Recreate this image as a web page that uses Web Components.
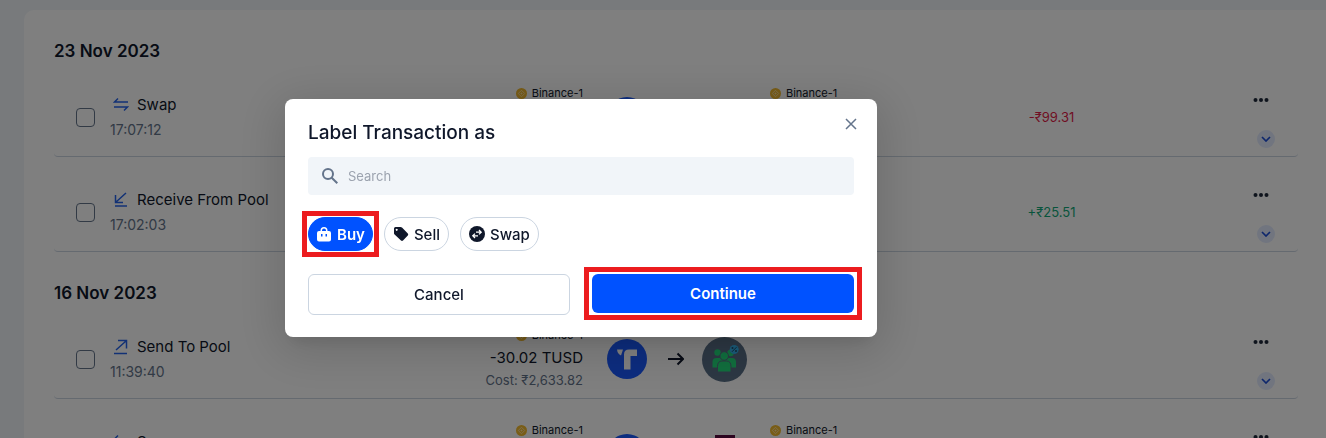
<!DOCTYPE html>
<html lang="en">
<head>
    <meta charset="UTF-8">
    <meta name="viewport" content="width=device-width, initial-scale=1.0">
    <title>Transactions</title>
    <style>
        body {
            margin: 0;
            height: 100vh;
            overflow: hidden;
            background: #f1f5f9;
            color: #0f172a;
            font-family: Inter, "Liberation Sans", sans-serif;
            font-size: 15px;
        }
    </style>
</head>
<body>
    <tx-list>
        <tx-group date="23 Nov 2023">
            <tx-row kind="swap" label="Swap" time="17:07:12" gain="-₹99.31" from="Binance-1" to="Binance-1">
                <token-icon slot="source" name="tusd"></token-icon>
            </tx-row>
            <tx-row kind="receive" label="Receive From Pool" time="17:02:03" gain="+₹25.51"></tx-row>
        </tx-group>
        <tx-group date="16 Nov 2023">
            <tx-row kind="send" label="Send To Pool" time="11:39:40" from="Binance-1" amount="-30.02 TUSD" cost="Cost: ₹2,633.82">
                <token-icon slot="source" name="tusd"></token-icon>
                <token-icon slot="target" name="pool"></token-icon>
            </tx-row>
            <tx-row kind="swap" label="Swap" time="" from="Binance-1" to="Binance-1">
                <token-icon slot="source" name="tusd"></token-icon>
                <token-icon slot="target" name="maroon"></token-icon>
            </tx-row>
        </tx-group>
    </tx-list>

    <modal-dialog heading="Label Transaction as">
        <search-box slot="search"></search-box>
        <focus-frame slot="chips"><label-chip icon="buy" active>Buy</label-chip></focus-frame>
        <label-chip slot="chips" icon="sell">Sell</label-chip>
        <label-chip slot="chips" icon="swap">Swap</label-chip>
        <action-button slot="actions">Cancel</action-button>
        <focus-frame slot="actions" class="wide"><action-button primary>Continue</action-button></focus-frame>
    </modal-dialog>

    <script>
        const kindIcons = {
            swap: `<path d="M15 5H1.500L5 1.500M1 10H14.500L11 13.500"/>`,
            receive: `<path d="M13 1L3 10M2.500 3V10.500H10M2 14H14"/>`,
            send: `<path d="M3 11L13 2M5 1.500H13.500V9.500M1 14.500H14"/>`
        };

        const tokens = {
            tusd: `<svg width="40" height="40" viewBox="0 0 40 40">
                <circle cx="20" cy="20" r="20" fill="#1a5aff"/>
                <path fill="#fff" d="M10 10.500H16L14 16.500Q10.500 15 10 10.500ZM17 17V15.500Q17 10.500 22 10.500H30V17H23.500V30.500H17Z"/>
            </svg>`,
            pool: `<svg width="45" height="45" viewBox="0 0 45 45">
                <circle cx="22.500" cy="22.500" r="22.500" fill="#5a7088"/>
                <g fill="#22dd7c">
                    <circle cx="15.500" cy="15.500" r="3.200"/><circle cx="28.500" cy="16" r="3.200"/>
                    <path d="M10.500 30.500V25Q10.500 21 14.500 21H30Q34 21 34 25V30.500Z"/>
                </g>
                <g fill="#22dd7c" stroke="#5a7088">
                    <circle cx="22.200" cy="19" r="4.300"/>
                    <path d="M15.500 35V29.500Q15.500 24 20 24H24.500Q29 24 29 29.500V35Z"/>
                </g>
                <circle cx="32.200" cy="12.500" r="4.500" fill="#35b6f2"/>
                <path d="M30 14.800L34.500 10.200" stroke="#1f4f70" fill="none"/>
                <circle cx="30.500" cy="11" r="1" fill="#1f4f70"/><circle cx="34" cy="14" r="1" fill="#1f4f70"/>
            </svg>`,
            maroon: `<svg width="45" height="40" viewBox="0 0 45 40"><path fill="#5a0a40" d="M13 1H33V39H13Z"/></svg>`
        };

        const chipIcons = {
            buy: `<path fill="currentColor" fill-rule="evenodd" d="M4.500 5V4.500a3.500 3.500 0 0 1 7 0V5H13a2 2 0 0 1 2 2v6.500a2 2 0 0 1-2 2H3a2 2 0 0 1-2-2V7a2 2 0 0 1 2-2ZM6 5h4V4.500a2 2 0 0 0-4 0ZM5 8v2.500h1.500V8ZM9.500 8v2.500H11V8Z"/>`,
            sell: `<path fill="currentColor" fill-rule="evenodd" d="M1 2.500Q1 1 2.500 1H7.500Q8.300 1 9 1.600L14.800 7.500Q15.700 8.500 14.800 9.500L10 14.500Q9 15.300 8 14.500L1.600 8.500Q1 8 1 7.200ZM3.700 2.700a1 1 0 1 0 .01 0Z"/>`,
            swap: `<circle cx="8" cy="8" r="8" fill="currentColor"/><path fill="none" stroke="#fff" stroke-width="1.300" d="M7 6.200H12M10 4L12.200 6.200L10 8.400M9 9.800H4M6 7.600L3.800 9.800L6 12"/>`
        };

        class TxList extends HTMLElement {
            constructor() {
                super();
                this.attachShadow({ mode: "open" }).innerHTML = `
                    <style>
                        :host {
                            display: block;
                            margin: 10px 0 0 24px;
                            padding: 0 28px 0 30px;
                            background: #fff;
                            border-radius: 10px 0 0 0;
                        }
                    </style>
                    <slot></slot>
                `;
            }
        }

        class TxGroup extends HTMLElement {
            constructor() {
                super();
                this.attachShadow({ mode: "open" }).innerHTML = `
                    <style>
                        :host { display: block; }
                        h2 {
                            margin: 0;
                            padding-top: 30px;
                            font-size: 17px;
                            font-weight: 600;
                            line-height: 22px;
                        }
                    </style>
                    <h2>${this.getAttribute("date")}</h2>
                    <slot></slot>
                `;
            }
        }

        class WalletName extends HTMLElement {
            constructor() {
                super();
                this.attachShadow({ mode: "open" }).innerHTML = `
                    <style>
                        :host {
                            display: flex;
                            align-items: center;
                            gap: 5px;
                            font-size: 11px;
                            line-height: 22px;
                        }
                    </style>
                    <svg width="11" height="11" viewBox="0 0 12 12">
                        <circle cx="6" cy="6" r="6" fill="#f3ba2f"/>
                        <path d="M6 2.500L9.500 6L6 9.500L2.500 6ZM6 5V7M5 6H7" fill="none" stroke="#fbe3a6"/>
                    </svg>
                    <slot></slot>
                `;
            }
        }

        class TokenIcon extends HTMLElement {
            constructor() {
                super();
                this.attachShadow({ mode: "open" }).innerHTML = `
                    <style>
                        :host { display: flex; }
                    </style>
                    ${tokens[this.getAttribute("name")]}
                `;
            }
        }

        class TxRow extends HTMLElement {
            constructor() {
                super();
                const get = (name) => this.getAttribute(name) || "";
                const wallet = (name) => get(name) ? `<wallet-name>${get(name)}</wallet-name>` : "";
                const gainClass = get("gain").startsWith("-") ? "loss" : "profit";

                this.attachShadow({ mode: "open" }).innerHTML = `
                    <style>
                        :host {
                            display: grid;
                            grid-template-columns: 56px 244fr 229fr 187fr 190fr 183fr 155fr;
                            align-items: center;
                            box-sizing: border-box;
                            min-height: 95px;
                            padding-top: 16px;
                            border-bottom: 1px solid #cbd5e1;
                            border-radius: 4px;
                        }
                        input {
                            appearance: none;
                            display: block;
                            width: 19px;
                            height: 19px;
                            margin: 0 0 0 22px;
                            border: 1px solid #64748b;
                            border-radius: 4px;
                            background: #fff;
                        }
                        .info { line-height: 25px; white-space: nowrap; }
                        .label { display: flex; align-items: center; gap: 8px; padding-left: 3px; }
                        .label svg { fill: none; stroke: #2563eb; stroke-width: 1.500; }
                        .time { color: #64748b; font-size: 14px; min-height: 25px; }
                        .side {
                            display: grid;
                            grid-template-rows: 22px 22px 24px;
                            justify-items: start;
                            align-items: center;
                            padding-bottom: 2px;
                            white-space: nowrap;
                        }
                        .from { justify-items: end; }
                        .cost { color: #64748b; font-size: 13px; }
                        .path {
                            display: grid;
                            grid-template-columns: 40px 1fr 45px;
                            align-items: center;
                            justify-items: center;
                            padding: 0 23px 0 24px;
                        }
                        .arrow { margin-left: 2px; }
                        .gain { text-align: center; font-size: 13px; }
                        .loss { color: #e11d48; }
                        .profit { color: #10a978; }
                        .menu {
                            display: flex;
                            flex-direction: column;
                            align-items: flex-end;
                            align-self: start;
                            gap: 8px;
                            padding-right: 23px;
                        }
                        button {
                            display: flex;
                            align-items: center;
                            justify-content: center;
                            padding: 0;
                            border: 0;
                            background: none;
                        }
                        .more { width: 28px; height: 44px; }
                        .expand { width: 18px; height: 18px; border-radius: 50%; background: #e3ebff; }
                    </style>
                    <input type="checkbox" aria-label="Select transaction">
                    <div class="info">
                        <div class="label">
                            <svg width="16" height="16" viewBox="0 0 16 16">${kindIcons[get("kind")]}</svg>
                            <span>${get("label")}</span>
                        </div>
                        <div class="time">${get("time")}</div>
                    </div>
                    <div class="side from">
                        ${wallet("from")}
                        <span>${get("amount")}</span>
                        <span class="cost">${get("cost")}</span>
                    </div>
                    <div class="path">
                        <slot name="source"></slot>
                        <svg class="arrow" width="16" height="14" viewBox="0 0 16 14" fill="none" stroke="#0f172a" stroke-width="2"><path d="M0 7H15M9.500 1.500L15 7L9.500 12.500"/></svg>
                        <slot name="target"></slot>
                    </div>
                    <div class="side">${wallet("to")}</div>
                    <div class="gain ${gainClass}">${get("gain")}</div>
                    <div class="menu">
                        <button class="more" aria-label="More">
                            <svg width="16" height="4" viewBox="0 0 16 4" fill="#1e293b"><circle cx="2.500" cy="2" r="2"/><circle cx="8" cy="2" r="2"/><circle cx="13.500" cy="2" r="2"/></svg>
                        </button>
                        <button class="expand" aria-label="Expand">
                            <svg width="10" height="6" viewBox="0 0 10 6" fill="none" stroke="#1d4ed8" stroke-width="1.700"><path d="M1 1L5 5L9 1"/></svg>
                        </button>
                    </div>
                `;
            }
        }

        class ModalDialog extends HTMLElement {
            constructor() {
                super();
                this.attachShadow({ mode: "open" }).innerHTML = `
                    <style>
                        :host {
                            position: fixed;
                            inset: 0;
                            display: flex;
                            align-items: center;
                            justify-content: center;
                            padding: 0 164px 2px 0;
                            background: rgba(0, 0, 0, 0.5);
                        }
                        section {
                            box-sizing: border-box;
                            width: 100%;
                            max-width: 592px;
                            padding: 22px 23px;
                            border-radius: 8px;
                            background: #fff;
                            box-shadow: 0 11px 15px -7px rgba(0, 0, 0, 0.1), 0 9px 46px 8px rgba(0, 0, 0, 0.14);
                        }
                        header { display: flex; justify-content: space-between; margin-bottom: 12px; }
                        h1 { margin: 0; font-size: 19px; font-weight: 500; line-height: 24px; }
                        button {
                            display: flex;
                            align-items: center;
                            justify-content: center;
                            width: 20px;
                            height: 20px;
                            margin: -7px -7px 0 0;
                            padding: 0;
                            border: 0;
                            background: none;
                        }
                        .chips { display: flex; gap: 11px; margin: 22px 0 23px; }
                        .actions { display: grid; grid-template-columns: 1fr 1fr; align-items: start; gap: 22px; }
                    </style>
                    <section role="dialog" aria-labelledby="title">
                        <header>
                            <h1 id="title">${this.getAttribute("heading")}</h1>
                            <button aria-label="Close">
                                <svg width="12" height="12" viewBox="0 0 12 12" fill="none" stroke="#64748b" stroke-width="1.500"><path d="M1 1L11 11M11 1L1 11"/></svg>
                            </button>
                        </header>
                        <slot name="search"></slot>
                        <div class="chips"><slot name="chips"></slot></div>
                        <div class="actions"><slot name="actions"></slot></div>
                    </section>
                `;
            }
        }

        class SearchBox extends HTMLElement {
            constructor() {
                super();
                this.attachShadow({ mode: "open" }).innerHTML = `
                    <style>
                        :host { display: block; }
                        label {
                            display: flex;
                            align-items: center;
                            gap: 9px;
                            height: 38px;
                            padding: 0 13px;
                            border-radius: 4px;
                            background: #f1f5f9;
                        }
                        input {
                            flex: 1;
                            padding: 0;
                            border: 0;
                            outline: 0;
                            background: none;
                            font: inherit;
                            font-size: 13px;
                        }
                        input::placeholder { color: #9ca3af; }
                    </style>
                    <label>
                        <svg width="18" height="18" viewBox="0 0 18 18" fill="none" stroke="#64748b" stroke-width="2"><circle cx="7" cy="7" r="5"/><path d="M10.700 10.700L16.300 16.300"/></svg>
                        <input type="text" placeholder="Search" aria-label="Search">
                    </label>
                `;
            }
        }

        class LabelChip extends HTMLElement {
            constructor() {
                super();
                this.attachShadow({ mode: "open" }).innerHTML = `
                    <style>
                        :host { display: block; }
                        button {
                            display: flex;
                            align-items: center;
                            gap: 5px;
                            height: 34px;
                            padding: 0 8px;
                            border: 1px solid #cbd5e1;
                            border-radius: 17px;
                            background: #fff;
                            color: #0f172a;
                            font: inherit;
                            font-weight: 500;
                        }
                        :host([active]) button {
                            padding: 0 7px;
                            border-color: #0052ff;
                            background: #0052ff;
                            color: #fff;
                            font-weight: 600;
                        }
                    </style>
                    <button>
                        <svg width="16" height="16" viewBox="0 0 16 16">${chipIcons[this.getAttribute("icon")]}</svg>
                        <slot></slot>
                    </button>
                `;
            }
        }

        class ActionButton extends HTMLElement {
            constructor() {
                super();
                this.attachShadow({ mode: "open" }).innerHTML = `
                    <style>
                        :host { display: block; }
                        button {
                            width: 100%;
                            height: 41px;
                            border: 1px solid #cbd5e1;
                            border-radius: 6px;
                            background: #fff;
                            color: #0f172a;
                            font: inherit;
                            font-weight: 500;
                        }
                        :host([primary]) button {
                            height: 39px;
                            border: 0;
                            background: #0052ff;
                            color: #fff;
                            font-weight: 600;
                        }
                    </style>
                    <button><slot></slot></button>
                `;
            }
        }

        /* Red frame drawn around whatever is slotted */
        class FocusFrame extends HTMLElement {
            constructor() {
                super();
                this.attachShadow({ mode: "open" }).innerHTML = `
                    <style>
                        :host { display: block; position: relative; }
                        :host::after {
                            content: "";
                            position: absolute;
                            inset: -6px;
                            border: 5px solid #ec1c1f;
                            pointer-events: none;
                        }
                        :host(.wide)::after { inset: -7px -8px; }
                    </style>
                    <slot></slot>
                `;
            }
        }

        customElements.define("wallet-name", WalletName);
        customElements.define("token-icon", TokenIcon);
        customElements.define("tx-row", TxRow);
        customElements.define("tx-group", TxGroup);
        customElements.define("tx-list", TxList);
        customElements.define("search-box", SearchBox);
        customElements.define("label-chip", LabelChip);
        customElements.define("action-button", ActionButton);
        customElements.define("focus-frame", FocusFrame);
        customElements.define("modal-dialog", ModalDialog);
    </script>
</body>
</html>
